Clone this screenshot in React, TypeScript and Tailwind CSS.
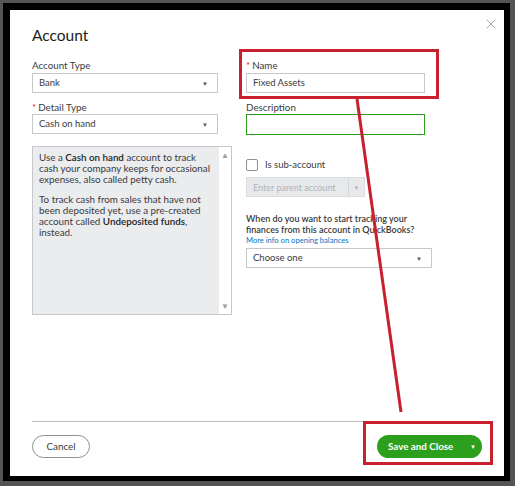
import { X } from "lucide-react";

function Select({ value, className }: { value: string; className: string }) {
  return (
    <div className={`flex items-center justify-between border border-[#c6c8cc] bg-white pl-[6px] pr-[9px] text-[9.5px] text-[#393a3d] ${className}`}>
      <span>{value}</span>
      <span className="text-[6px] text-[#555]">▼</span>
    </div>
  );
}

export default function App() {
  return (
    <div className="relative h-[486px] w-[515px] overflow-hidden bg-[#545454] p-[3px] font-['Lato',sans-serif] text-[#393a3d]">
      <div className="h-[478px] w-[507px] border-b-[5px] border-l-[7px] border-r-[6px] border-t-[7px] border-black bg-white">
        <div className="relative h-full px-[22px] pt-[15px]">
          <button className="absolute right-[5px] top-[6px] text-[#8d9096]">
            <X size={16} strokeWidth={1.2} />
          </button>
          <h1 className="text-[15.5px] leading-[20px] text-[#222]">Account</h1>

          <div className="mt-[13px] flex gap-[14px]">
            {/* left column */}
            <div className="w-[200px]">
              <div className="text-[9.8px] leading-[14px]">Account Type</div>
              <Select value="Bank" className="mt-px h-[20px] w-[186px]" />
              <div className="mt-[7px] text-[9.8px] leading-[14px]">
                <span className="mr-[2px] text-[#d52b1e]">*</span>Detail Type
              </div>
              <Select value="Cash on hand" className="h-[20px] w-[186px]" />

              <div className="mt-[12px] flex h-[169px] w-[200px] border border-[#c6c8cc] bg-[#ebecee]">
                <div className="min-w-0 flex-1 whitespace-nowrap pl-[6px] pt-[5px] text-[9.8px] leading-[11.2px] text-[#393a3d]">
                  <p>
                    Use a <span className="font-semibold text-[#222]">Cash on hand</span> account to track
                    <br />
                    cash your company keeps for occasional
                    <br />
                    expenses, also called petty cash.
                  </p>
                  <p className="mt-[8px]">
                    To track cash from sales that have not
                    <br />
                    been deposited yet, use a pre-created
                    <br />
                    account called <span className="font-semibold text-[#222]">Undeposited funds</span>,
                    <br />
                    instead.
                  </p>
                </div>
                <div className="flex w-[12px] flex-col items-center justify-between bg-white py-[4px] text-[8px] leading-none text-[#a0a0a0]">
                  <span>▲</span>
                  <span>▼</span>
                </div>
              </div>
            </div>

            {/* right column */}
            <div className="w-[190px]">
              <div className="text-[9.8px] leading-[14px]">
                <span className="mr-[2px] text-[#d52b1e]">*</span>Name
              </div>
              <div className="mt-px flex h-[20px] w-[179px] items-center border border-[#c6c8cc] pl-[6px] text-[9.5px]">
                Fixed Assets
              </div>
              <div className="mt-[7px] text-[9.8px] leading-[14px]">Description</div>
              <div className="h-[21px] w-[179px] border border-[#2ca01c]" />

              <div className="mt-[23px] flex items-center gap-[7px]">
                <div className="h-[12px] w-[12px] rounded-[2px] border border-[#8d9096] bg-white" />
                <span className="text-[9.5px]">Is sub-account</span>
              </div>
              <div className="mt-[5px] flex h-[20px] w-[119px] items-center border border-[#dcdde0] bg-[#e8e9eb] text-[9px] text-[#b0b3b8]">
                <span className="flex-1 pl-[6px]">Enter parent account</span>
                <span className="flex h-full w-[16px] items-center justify-center border-l border-[#d4d6d9] text-[6px]">▼</span>
              </div>

              <div className="mt-[17px] text-[9px] font-semibold leading-[10.5px] text-[#393a3d]">
                When do you want to start tracking your
                <br />
                finances from this account in QuickBooks?
              </div>
              <div className="text-[7.6px] leading-[10px] text-[#0077c5]">More info on opening balances</div>
              <Select value="Choose one" className="mt-[3px] h-[20px] w-[186px]" />
            </div>
          </div>

          <div className="mt-[106px] h-px w-[332px] bg-[#babec5]" />
          <div className="mt-[13px] flex items-center justify-between">
            <button className="flex h-[23px] w-[58px] items-center justify-center rounded-full border border-[#8d9096] text-[9.8px] text-[#393a3d]">
              Cancel
            </button>
            <button className="flex h-[23px] w-[105px] items-center rounded-full bg-[#2ca01c] pl-[11px] text-[9.8px] font-bold text-white">
              <span>Save and Close</span>
              <span className="ml-auto mr-[6px] text-[6px]">▼</span>
            </button>
          </div>
        </div>
      </div>

      {/* annotations */}
      <div className="absolute left-[239px] top-[49px] h-[50px] w-[200px] border-[3px] border-[#c8202f]" />
      <div className="absolute left-[363px] top-[421px] h-[44px] w-[130px] border-[3px] border-[#c8202f]" />
      <svg className="pointer-events-none absolute left-0 top-0" width="515" height="486">
        <line x1="357" y1="99" x2="401" y2="412" stroke="#c8202f" strokeWidth="3" />
      </svg>
    </div>
  );
}
